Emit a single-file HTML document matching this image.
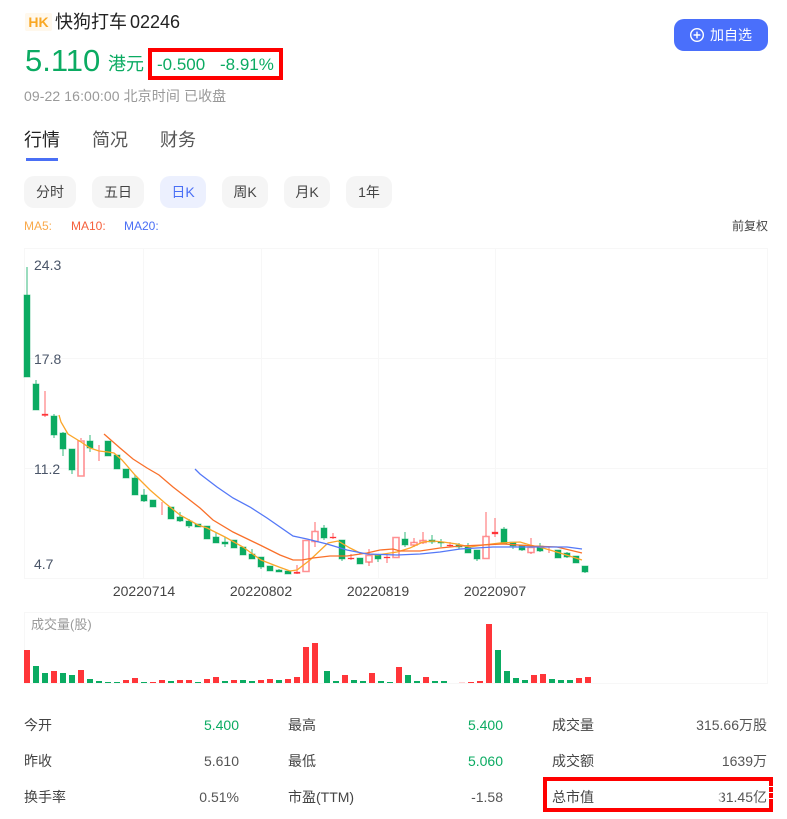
<!DOCTYPE html>
<html lang="zh"><head><meta charset="utf-8"><title>快狗打车 02246</title>
<style>
html,body{margin:0;padding:0;background:#fff}
body{position:relative;width:787px;height:819px;overflow:hidden;font-family:"Liberation Sans","Noto Sans CJK SC",sans-serif;color:#333}
.a{position:absolute;white-space:nowrap;line-height:1}
.p{position:absolute;top:176px;height:32px;line-height:32px;border-radius:10px;background:#f5f5f5;text-align:center;font-size:14px;color:#444}
.l{font-size:14px;color:#444;height:16px;line-height:16px}
.v{font-size:14px;color:#555;text-align:right;width:120px;height:16px;line-height:16px}
.g{color:#0bab62}
.y{font-size:14px;color:#4a5568}
.d{font-size:14px;color:#444;width:90px;text-align:center}
.b{position:absolute;border:4px solid #f00;box-sizing:border-box}
svg{position:absolute;left:0;top:0}
</style></head><body>
<div class="a" style="left:25px;top:13px;width:27px;height:18px;line-height:18px;background:#fff8ec;color:#f9a825;font-size:14px;font-weight:bold;text-align:center;border-radius:2px">HK</div>
<div class="a" style="left:55px;top:13px;font-size:18px;color:#222;word-spacing:-2px">快狗打车 02246</div>
<div class="a g" style="left:25px;top:45px;font-size:31px">5.110</div>
<div class="a g" style="left:108px;top:55px;font-size:18px">港元</div>
<div class="b" style="left:148px;top:48px;width:135px;height:32px"></div>
<div class="a g" style="left:157px;top:56px;font-size:17px">-0.500</div>
<div class="a g" style="left:220px;top:56px;font-size:17px">-8.91%</div>
<div class="a" style="left:24px;top:89px;font-size:14px;color:#999;letter-spacing:.1px">09-22 16:00:00 北京时间 已收盘</div>
<div class="a" style="left:674px;top:19px;width:94px;height:32px;background:#4a6ffb;border-radius:10px"></div>
<svg width="787" height="819" viewBox="0 0 787 819"><circle cx="697" cy="35" r="6.3" fill="none" stroke="#fff" stroke-width="1.4"/><path d="M693.6 35h6.8M697 31.6v6.8" stroke="#fff" stroke-width="1.4" fill="none"/></svg>
<div class="a" style="left:710px;top:28px;font-size:14px;color:#fff">加自选</div>
<div class="a" style="left:24px;top:131px;font-size:18px;color:#222">行情</div>
<div class="a" style="left:92px;top:131px;font-size:18px;color:#555">简况</div>
<div class="a" style="left:160px;top:131px;font-size:18px;color:#555">财务</div>
<div class="a" style="left:26px;top:158px;width:32px;height:3px;background:#4a6ff5"></div>
<div class="p" style="left:24px;width:52px">分时</div>
<div class="p" style="left:92px;width:52px">五日</div>
<div class="p" style="left:160px;width:46px;background:#ecf0fe;color:#4a6ff5">日K</div>
<div class="p" style="left:222px;width:46px">周K</div>
<div class="p" style="left:284px;width:46px">月K</div>
<div class="p" style="left:346px;width:46px">1年</div>
<div class="a" style="left:24px;top:220px;font-size:12px;color:#f9a94b">MA5:</div>
<div class="a" style="left:71px;top:220px;font-size:12px;color:#f5603c">MA10:</div>
<div class="a" style="left:124px;top:220px;font-size:12px;color:#4a6ff5">MA20:</div>
<div class="a" style="right:19px;top:220px;font-size:12px;color:#444">前复权</div>

<svg width="787" height="819" viewBox="0 0 787 819">
<g fill="none" stroke="#f7f7f7" stroke-width="1">
<path d="M24.500 248.500H767.500V578.500H24.500ZM24.500 358.500H767.500M24.500 468.500H767.500M143.500 248.500V578.500M261.500 248.500V578.500M378.500 248.500V578.500M495.500 248.500V578.500"/>
<path d="M24.500 612.500H767.500V683.500H24.500Z"/>
</g>
<path fill="none" stroke="#0bab62" stroke-opacity=".55" stroke-width="1.500" d="M27 267V295M36 380V384M54 414V438M63 432V456M72 470V474M90 435V452M135 475V478M144 489V502M180 512V522M189 519V528M216 532V537M225 537V547M252 549V554M261 567V569M279 569V572M324 525V540M342 559V561M378 559V562M405 532V547M432 535V544M441 539V547M459 543V549M468 543V547M477 559V561M504 527V529M513 546V549M522 550V551M540 543V552M567 552V558M585 572V573"/>
<path fill="#0bab62" stroke="#0bab62" stroke-opacity=".45" stroke-width="1" d="M24 295h6v82h-6zM33 384h6v26h-6zM51 416h6v19h-6zM60 433h6v16h-6zM69 449h6v21h-6zM87 441h6v7h-6zM105 441h6v15h-6zM114 455h6v14h-6zM123 469h6v9h-6zM132 478h6v17h-6zM141 495h6v6h-6zM150 500h6v7h-6zM168 507h6v12h-6zM177 517h6v4h-6zM186 521h6v5h-6zM195 524h6v3h-6zM204 526h6v13h-6zM213 537h6v6h-6zM222 542h6v2h-6zM231 540h6v8h-6zM240 547h6v8h-6zM249 554h6v5h-6zM258 557h6v10h-6zM267 566h6v5h-6zM276 570h6v2h-6zM285 571h6v3h-6zM321 528h6v10h-6zM339 540h6v19h-6zM357 558h6v6h-6zM375 555h6v4h-6zM402 539h6v6h-6zM429 540h6v2h-6zM438 542h6v1h-6zM456 545h6v2h-6zM465 547h6v6h-6zM474 550h6v9h-6zM501 529h6v15h-6zM510 542h6v4h-6zM519 545h6v5h-6zM537 546h6v5h-6zM555 550h6v8h-6zM564 553h6v4h-6zM573 556h6v7h-6zM582 566h6v6h-6z"/>
<path fill="none" stroke="#ff3539" stroke-opacity=".5" stroke-width="1.500" d="M45 391V417M81 438V440M99 445V461M162 502V515M297 565V574M315 522V531M315 541V547M333 533V539M351 554V560M369 549V555M369 562V566M387 554V563M414 538V547M423 532V544M450 542V547M486 512V536M495 518V537M531 538V547M531 552V554M549 547V553"/>
<path fill="#ff3539" stroke="#ff3539" stroke-opacity=".4" stroke-width=".8" d="M42 414h6v1.500h-6zM294 572h6v1.500h-6zM330 537h6v1h-6zM348 558h6v1h-6zM384 557h6v1h-6zM447 545h6v1h-6zM492 532h6v2h-6z"/>
<path fill="#fff" stroke="#ff3539" stroke-opacity=".55" stroke-width="1.600" d="M78 441h6v35h-6zM303 540.500h6v31h-6zM312 531.500h6v10h-6zM366 555.500h6v6.500h-6zM393 537.500h6v20h-6zM483 536.500h6v22h-6zM528 547.500h6v5h-6zM411 542.500h6v2.500h-6zM420 540.500h6v2h-6z"/>
<path fill="none" stroke="#fba62a" stroke-width="1.300" d="M59 415L61 422L68 434L81 442L90 448L99 451L108 452L114 453L122 460L135 475L150 490L165 503L180 515L198 525L207 528L225 537L243 547L261 560L279 567L290 571L297 570L310 560L328 543L338 541L350 548L360 553L377 555L397 552L410 548L423 542L433 541L443 542L457 544L470 547L483 545L500 543L520 542L530 545L543 548L560 553L582 560"/>
<path fill="none" stroke="#f9702a" stroke-width="1.300" d="M104 434L120 448L133 459L147 468L159 475L173 487L200 508L213 520L233 532L260 545L280 555L293 560L302 560L313 558L330 556L347 556L367 553L380 550L393 549L400 551L420 551L440 548L460 546L483 545L503 544L533 546L557 547L582 553"/>
<path fill="none" stroke="#5478f7" stroke-width="1.300" d="M195 469L200 474L217 487L233 498L250 507L267 518L293 536L307 539L327 544L347 550L367 554L397 555L420 554L440 552L460 549L493 547L533 547L567 547L582 549"/>
<path fill="#0bab62" d="M33 666h6v17h-6zM42 673h6v10h-6zM60 673h6v10h-6zM69 675h6v8h-6zM87 679h6v4h-6zM96 681h6v2h-6zM105 682h6v1h-6zM114 682h6v1h-6zM141 682h6v1h-6zM168 681h6v2h-6zM195 682h6v1h-6zM222 681h6v2h-6zM240 680h6v3h-6zM249 681h6v2h-6zM276 680h6v3h-6zM324 671h6v12h-6zM333 681h6v2h-6zM351 680h6v3h-6zM360 681h6v2h-6zM378 681h6v2h-6zM387 682h6v1h-6zM405 675h6v8h-6zM414 681h6v2h-6zM432 681h6v2h-6zM441 681h6v2h-6zM495 650h6v33h-6zM504 671h6v12h-6zM513 678h6v5h-6zM522 680h6v3h-6zM549 679h6v4h-6zM558 680h6v3h-6zM567 680h6v3h-6z"/>
<path fill="#ff3539" d="M24 650h6v33h-6zM51 671h6v12h-6zM78 670h6v13h-6zM123 680h6v3h-6zM132 678h6v5h-6zM150 682h6v1h-6zM159 680h6v3h-6zM177 680h6v3h-6zM186 680h6v3h-6zM204 679h6v4h-6zM213 677h6v6h-6zM231 680h6v3h-6zM258 680h6v3h-6zM267 679h6v4h-6zM285 679h6v4h-6zM294 677h6v6h-6zM303 647h6v36h-6zM312 643h6v40h-6zM342 675h6v8h-6zM369 673h6v10h-6zM396 667h6v16h-6zM423 677h6v6h-6zM468 682h6v1h-6zM477 681h6v2h-6zM486 624h6v59h-6zM531 675h6v8h-6zM540 674h6v9h-6zM576 678h6v5h-6zM585 677h6v6h-6z"/>
<path fill="#ffd5d6" d="M459 682h6v1h-6z"/>
</svg>

<div class="a y" style="left:34px;top:258px">24.3</div>
<div class="a y" style="left:34px;top:352px">17.8</div>
<div class="a y" style="left:34px;top:462px">11.2</div>
<div class="a y" style="left:34px;top:557px">4.7</div>
<div class="a d" style="left:99px;top:584px">20220714</div>
<div class="a d" style="left:216px;top:584px">20220802</div>
<div class="a d" style="left:333px;top:584px">20220819</div>
<div class="a d" style="left:450px;top:584px">20220907</div>
<div class="a" style="left:31px;top:618px;font-size:13px;color:#999">成交量(股)</div>

<div class="a l" style="left:24px;top:717px">今开</div><div class="a v g" style="left:119px;top:717px;color:#0bab62">5.400</div>
<div class="a l" style="left:288px;top:717px">最高</div><div class="a v g" style="left:383px;top:717px;color:#0bab62">5.400</div>
<div class="a l" style="left:552px;top:717px">成交量</div><div class="a v" style="left:647px;top:717px">315.66万股</div>
<div class="a l" style="left:24px;top:753px">昨收</div><div class="a v" style="left:119px;top:753px">5.610</div>
<div class="a l" style="left:288px;top:753px">最低</div><div class="a v g" style="left:383px;top:753px;color:#0bab62">5.060</div>
<div class="a l" style="left:552px;top:753px">成交额</div><div class="a v" style="left:647px;top:753px">1639万</div>
<div class="a l" style="left:24px;top:789px">换手率</div><div class="a v" style="left:119px;top:789px">0.51%</div>
<div class="a l" style="left:288px;top:789px">市盈(TTM)</div><div class="a v" style="left:383px;top:789px">-1.58</div>
<div class="a l" style="left:552px;top:789px">总市值</div><div class="a v" style="left:647px;top:789px">31.45亿</div>
<div class="b" style="left:543px;top:777px;width:230px;height:35px"></div>
<div class="a" style="left:716px;top:789px;width:6px;height:16px;background:#fff;opacity:.55"></div>
<div class="a" style="left:769px;top:786px;width:4px;height:1px;background:#fff"></div>
<div class="a" style="left:769px;top:792px;width:4px;height:1px;background:#fff"></div>
<div class="a" style="left:769px;top:798px;width:4px;height:1px;background:#fff"></div>
</body></html>
